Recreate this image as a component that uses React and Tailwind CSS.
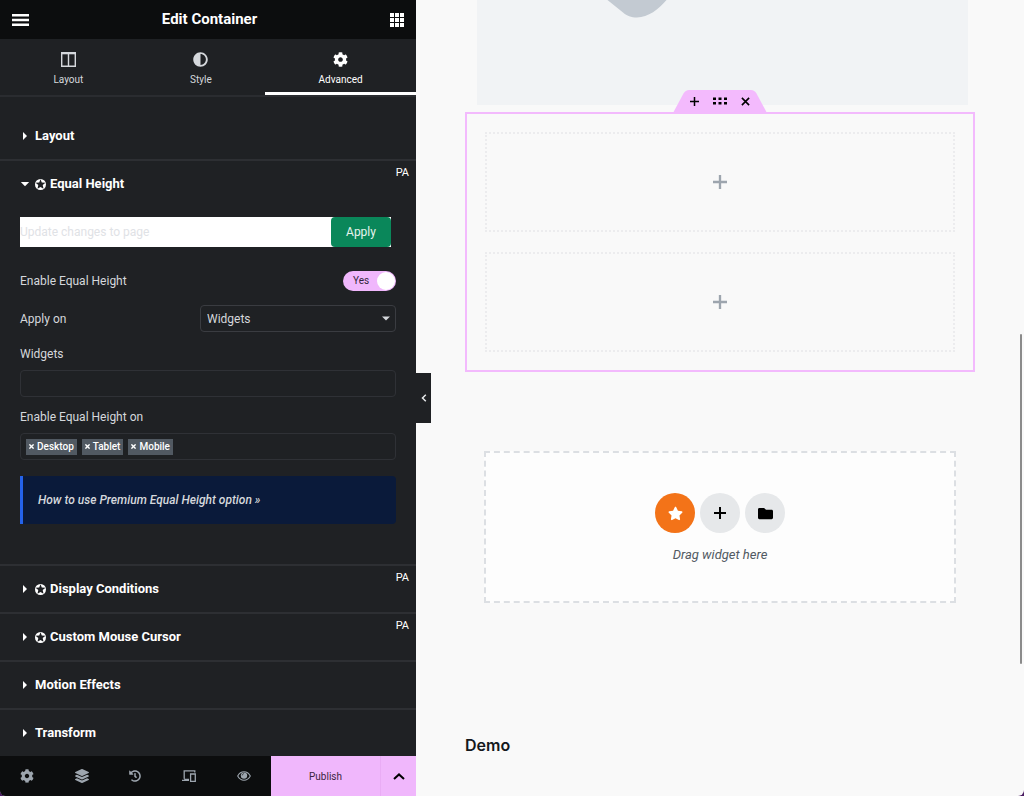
import React, { useState } from 'react';
import { FaAdjust, FaCog, FaLayerGroup, FaHistory, FaStar, FaFolder } from 'react-icons/fa';

const initialDevices = ['Desktop', 'Tablet', 'Mobile'];

const tabs = [
  { id: 'layout', label: 'Layout', icon: <ColumnsIcon /> },
  { id: 'style', label: 'Style', icon: <FaAdjust className="size-[15px]" /> },
  { id: 'advanced', label: 'Advanced', icon: <FaCog className="size-[15px]" /> },
];

export default function App() {
  return (
    <div className="h-screen bg-[#4b1d63] font-['Roboto',sans-serif]">
      <div className="flex h-full overflow-hidden rounded-b-md bg-[#f9f9f9]">
        <Panel />
        <Canvas />
      </div>
    </div>
  );
}

// --- PANEL ---
function Panel() {
  const [activeTab, setActiveTab] = useState('advanced');

  return (
    <aside className="relative flex w-[416px] shrink-0 flex-col bg-[#1f2124] text-white">
      <header className="flex h-[39px] shrink-0 items-center justify-between bg-[#0c0d0e] px-3">
        <button aria-label="Menu"><MenuIcon /></button>
        <h1 className="text-[15px] font-bold">Edit Container</h1>
        <button aria-label="Widgets"><GridIcon /></button>
      </header>

      <nav className="flex h-[58px] shrink-0 border-b-2 border-[#2a2c30]">
        {tabs.map((tab) => (
          <button
            key={tab.id}
            onClick={() => setActiveTab(tab.id)}
            className={
              activeTab === tab.id
                ? 'flex flex-auto flex-col items-center gap-1 border-b-3 border-white pt-[13px] text-[10px] leading-[18px] text-white'
                : 'flex flex-auto flex-col items-center gap-1 border-b-3 border-transparent pt-[13px] text-[10px] leading-[18px] text-[#d5d8dc]'
            }
          >
            {tab.icon}
            {tab.label}
          </button>
        ))}
      </nav>

      <div className="min-h-0 flex-1 overflow-hidden pt-4">
        <Section title="Layout" />
        <Section title="Equal Height" premium open>
          <EqualHeightControls />
        </Section>
        <Section title="Display Conditions" premium />
        <Section title="Custom Mouse Cursor" premium />
        <Section title="Motion Effects" />
        <Section title="Transform" />
      </div>

      <PanelFooter />

      <button aria-label="Hide panel" className="absolute top-[373px] left-full z-10 flex h-[50px] w-[15px] items-center justify-center bg-[#1f2124] text-[#e6e8ea]">
        <svg className="h-2 w-[6px]" viewBox="0 0 6 8" fill="none" stroke="currentColor" strokeWidth="1.5"><path d="M4.8 .8 1.5 4l3.3 3.2" /></svg>
      </button>
    </aside>
  );
}

function Section({ title, premium, open, children }) {
  return (
    <section className="relative border-b-2 border-[#2d2f33]">
      <button className="flex h-[46px] w-full items-center pl-5 text-left text-[13px] font-bold">
        <svg className="mr-[5px] size-[10px]" viewBox="0 0 10 10" fill="currentColor">
          {open ? <path d="M.8 3h8.400L5 7.200z" /> : <path d="M3 1v8l4-4z" />}
        </svg>
        {premium && <PremiumIcon />}
        {title}
      </button>
      {premium && <span className="absolute top-1 right-[7px] text-[11px] leading-4 text-white">PA</span>}
      {children}
    </section>
  );
}

function EqualHeightControls() {
  const [enabled, setEnabled] = useState(true);
  const [devices, setDevices] = useState(initialDevices);

  return (
    <div className="px-5 pt-[10px] pb-10 text-xs leading-[18px] text-[#d5d8dc]">
      <div className="mr-[5px] flex h-[30px] bg-white">
        <input aria-label="Update changes to page" placeholder="Update changes to page" className="min-w-0 flex-1 bg-white text-black outline-none placeholder:text-[#dfe2e6]" />
        <button className="w-[60px] rounded-sm bg-[#0a875a] text-[#e6f4ee]">Apply</button>
      </div>

      <div className="mt-6 flex h-5 items-center justify-between">
        <label htmlFor="enable">Enable Equal Height</label>
        <span className="relative flex h-5 w-[53px] items-center rounded-full bg-[#f0b7fc]">
          <input id="enable" type="checkbox" checked={enabled} onChange={() => setEnabled(!enabled)} className="absolute inset-0 size-full cursor-pointer appearance-none" />
          <span className="pl-[10px] text-[10px] text-[#33263a]">{enabled ? 'Yes' : 'No'}</span>
          <span className="pointer-events-none absolute right-px size-[18px] rounded-full bg-white" />
        </span>
      </div>

      <div className="mt-[14px] flex items-center justify-between">
        <label htmlFor="apply-on">Apply on</label>
        <div className="relative w-[196px]">
          <select id="apply-on" className="h-[27px] w-full appearance-none rounded-sm border border-[#3a3c41] bg-[#1f2124] px-[6px]">
            <option>Widgets</option>
            <option>Custom Selector</option>
          </select>
          <svg className="pointer-events-none absolute top-[11px] right-[6px] h-[5px] w-2" viewBox="0 0 8 5" fill="currentColor"><path d="M0 .5h8L4 4.500z" /></svg>
        </div>
      </div>

      <label htmlFor="widgets" className="mt-[13px] block">Widgets</label>
      <input id="widgets" className="mt-[7px] block h-[27px] w-full rounded-sm border border-[#2f3136] bg-transparent px-[5px] outline-none" />

      <p className="mt-[11px]">Enable Equal Height on</p>
      <div className="mt-[7px] flex h-[27px] items-center gap-[5px] rounded-sm border border-[#2f3136] px-[5px]">
        {devices.map((device) => (
          <span key={device} className="flex h-4 items-center gap-[3px] bg-[#515962] px-[3px] text-[10px] font-medium text-white">
            <button aria-label={`Remove ${device}`} onClick={() => setDevices(devices.filter((d) => d !== device))}>
              <svg className="size-[5px]" viewBox="0 0 5 5" stroke="currentColor" strokeWidth="1.4"><path d="M.4.4l4.200 4.200M4.600.4.4 4.600" /></svg>
            </button>
            {device}
          </span>
        ))}
      </div>

      <div className="mt-4 flex h-12 items-center rounded-r-sm border-l-3 border-[#2563eb] bg-[#0a1a3a] pl-[15px]">
        <a href="#docs" className="font-medium italic">How to use Premium Equal Height option »</a>
      </div>
    </div>
  );
}

function PanelFooter() {
  return (
    <footer className="flex h-10 shrink-0 bg-[#0c0d0e] text-[#9da5ae]">
      <div className="flex flex-1 items-center justify-around">
        <button aria-label="Settings"><FaCog className="size-[14px]" /></button>
        <button aria-label="Structure"><FaLayerGroup className="size-[14px]" /></button>
        <button aria-label="History"><FaHistory className="size-3" /></button>
        <button aria-label="Responsive mode">
          <svg className="h-3 w-[14px]" viewBox="0 0 14 12" fill="none" stroke="currentColor" strokeWidth="1.300"><path d="M12.800 2.600V.8H2.200v8M0 10.400h7M8.600 4h4.700v7.300H8.600zM2.200 9.500H7" /></svg>
        </button>
        <button aria-label="Preview">
          <svg className="h-[10px] w-[14px]" viewBox="0 0 14 10" fill="none" stroke="currentColor" strokeWidth="1.1"><path d="M.7 5C2.200 2.200 4.400.8 7 .8S11.800 2.200 13.300 5C11.800 7.800 9.600 9.200 7 9.200S2.200 7.800.7 5z" /><circle cx="7" cy="4.600" r="3.200" fill="currentColor" stroke="none" /><path d="M5.200 4.400c0-1 .7-1.700 1.700-1.700" stroke="#0c0d0e" strokeWidth=".7" /></svg>
        </button>
      </div>
      <button className="w-[109px] bg-[#f0b7fc] text-[10px] text-[#3a2440]">Publish</button>
      <button aria-label="Save options" className="flex w-9 items-center justify-center border-l border-[#e9acf5] bg-[#f0b7fc] text-black">
        <svg className="h-[7px] w-3" viewBox="0 0 12 7" fill="none" stroke="currentColor" strokeWidth="2"><path d="M1 6l5-4.600L11 6" /></svg>
      </button>
    </footer>
  );
}

// --- CANVAS ---
function Canvas() {
  return (
    <main className="relative flex-1 overflow-hidden px-[49px] text-black">
      <div className="ml-3 mr-[7px] h-[105px] bg-[#f1f3f5]">
        <svg className="ml-[126px] h-[18px] w-[66px]" viewBox="0 0 66 18" fill="#c3cad2"><path d="M4.500 0h59C56 9 45 17.500 34 17.500c-6 0-10-1.500-14-5z" /></svg>
      </div>

      <div className="relative mt-[7px] flex flex-col gap-5 border-2 border-[#f3bafd] p-[18px]">
        <div className="absolute -top-[25px] left-1/2 flex h-6 w-[94px] -translate-x-1/2 items-center justify-center gap-[14px]">
          <svg className="absolute inset-0 size-full" viewBox="0 0 94 24" fill="#f3bafd"><path d="M0 24 10.500 4.500Q12.500 1 16 1h62q3.500 0 5.500 3.500L94 24z" /></svg>
          <button aria-label="Add container" className="relative"><PlusIcon className="block size-[9px]" /></button>
          <button aria-label="Edit container" className="relative">
            <svg className="block h-2 w-[14px]" viewBox="0 0 14 8" fill="currentColor"><path d="M0 .5h3v2.500H0zM5.500.5h3v2.500h-3zM11 .5h3v2.500h-3zM0 5h3v2.500H0zM5.500 5h3v2.500h-3zM11 5h3v2.500h-3z" /></svg>
          </button>
          <button aria-label="Delete container" className="relative">
            <svg className="block size-[9px]" viewBox="0 0 9 9" stroke="currentColor" strokeWidth="1.600"><path d="M.9.9l7.200 7.200M8.100.9.9 8.100" /></svg>
          </button>
        </div>
        <EmptyColumn />
        <EmptyColumn />
      </div>

      <div className="mt-[79px] mr-[19px] ml-[19px] flex h-[152px] flex-col items-center border-2 border-dashed border-[#dcdfe3] bg-[#fdfdfd] pt-10">
        <div className="flex gap-[5px]">
          <button aria-label="Premium templates" className="flex size-10 items-center justify-center rounded-full bg-[#f37318] text-white"><FaStar className="size-[15px]" /></button>
          <button aria-label="Add new container" className="flex size-10 items-center justify-center rounded-full bg-[#e6e8ea]"><PlusIcon className="size-3" /></button>
          <button aria-label="Add template" className="flex size-10 items-center justify-center rounded-full bg-[#e6e8ea]"><FaFolder className="size-[15px]" /></button>
        </div>
        <p className="mt-3 text-[13px] leading-5 text-[#515962] italic">Drag widget here</p>
      </div>

      <h2 className="mt-[130px] font-['Inter',sans-serif] text-base font-semibold text-[#14181c]">Demo</h2>

      <span className="absolute top-[334px] right-[2px] h-[330px] w-[2px] rounded-full bg-[#8b8b8b]" />
    </main>
  );
}

function EmptyColumn() {
  return (
    <div className="flex h-[100px] items-center justify-center border-2 border-dotted border-[#ececee] text-[#9da5ae]">
      <button aria-label="Add widget"><PlusIcon className="block size-[14px]" /></button>
    </div>
  );
}

// --- ICONS ---
function MenuIcon() {
  return <svg className="h-3 w-[17px]" viewBox="0 0 17 12" fill="currentColor"><path d="M0 0h17v2.500H0zM0 4.800h17v2.500H0zM0 9.500h17V12H0z" /></svg>;
}

function GridIcon() {
  return <svg className="size-[14px]" viewBox="0 0 14 14" fill="currentColor"><path d="M0 0h4v4H0zM5 0h4v4H5zM10 0h4v4h-4zM0 5h4v4H0zM5 5h4v4H5zM10 5h4v4h-4zM0 10h4v4H0zM5 10h4v4H5zM10 10h4v4h-4z" /></svg>;
}

function ColumnsIcon() {
  return <svg className="size-[15px]" viewBox="0 0 15 15" fill="none" stroke="currentColor" strokeWidth="1.400"><path d="M.7.7h13.600v13.600H.7zM7.500 2v12.400" /><path d="M0 1.300h15" strokeWidth="2" /></svg>;
}

function PlusIcon({ className }) {
  return <svg className={className} viewBox="0 0 12 12" stroke="currentColor" strokeWidth="2"><path d="M6 0v12M0 6h12" /></svg>;
}

// White disc with a dark star whose points run out to the edge
function PremiumIcon() {
  return (
    <svg className="mr-1 size-[11px]" viewBox="0 0 12 12">
      <circle cx="6" cy="6" r="6" fill="white" />
      <path d="M6 .2l1.400 3.500 4 .3-3 2.600.9 4L6 8.600l-3.300 2 .9-4L.6 4l4-.3z" fill="#1f2124" />
    </svg>
  );
}
